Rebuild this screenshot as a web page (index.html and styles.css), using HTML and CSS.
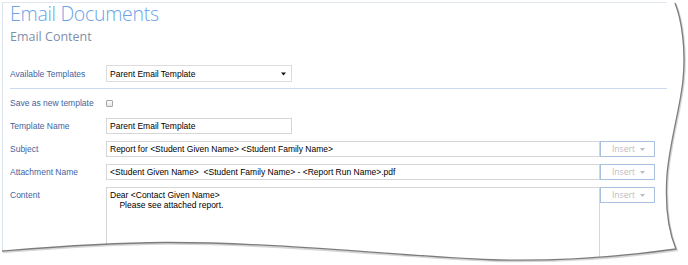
FILE: index.html
```html
<!DOCTYPE html>
<html>
<head>
<meta charset="utf-8">
<link rel="stylesheet" href="styles.css">
</head>
<body>
<div class="page">
  <div class="panel">
    <h1 class="title">Email Documents</h1>
    <h2 class="subtitle">Email Content</h2>
    <div class="row row-templates">
      <label class="label">Available Templates</label>
      <div class="select">
        <span>Parent Email Template</span>
        <svg class="select-arrow" width="5" height="4" viewBox="0 0 5 4"><path d="M0 0.5H5L2.5 3.5Z" fill="#111"/></svg>
      </div>
    </div>
    <div class="sep"></div>
    <div class="fields">
      <div class="row">
        <label class="label">Save as new template</label>
        <span class="checkbox"></span>
      </div>
      <div class="row">
        <label class="label">Template Name</label>
        <input class="input input-short" value="Parent Email Template">
      </div>
      <div class="row">
        <label class="label">Subject</label>
        <div class="group">
          <input class="input input-wide" value="Report for &lt;Student Given Name&gt; &lt;Student Family Name&gt;">
          <button class="insert">Insert<svg class="insert-arrow" width="5" height="3" viewBox="0 0 5 3"><path d="M0 0H5L2.5 3Z" fill="#bdbdbd"/></svg></button>
        </div>
      </div>
      <div class="row">
        <label class="label">Attachment Name</label>
        <div class="group">
          <input class="input input-wide" value="&lt;Student Given Name&gt;  &lt;Student Family Name&gt; - &lt;Report Run Name&gt;.pdf">
          <button class="insert">Insert<svg class="insert-arrow" width="5" height="3" viewBox="0 0 5 3"><path d="M0 0H5L2.5 3Z" fill="#bdbdbd"/></svg></button>
        </div>
      </div>
      <div class="row row-content">
        <label class="label">Content</label>
        <div class="group group-top">
          <textarea class="textarea">Dear &lt;Contact Given Name&gt;
    Please see attached report.</textarea>
          <button class="insert">Insert<svg class="insert-arrow" width="5" height="3" viewBox="0 0 5 3"><path d="M0 0H5L2.5 3Z" fill="#bdbdbd"/></svg></button>
        </div>
      </div>
    </div>
  </div>
  <svg class="tear" width="688" height="265" viewBox="0 0 688 265">
    <path fill="#ffffff" fill-rule="evenodd" d="M0,0 H688 V265 H0 Z M0,0 L675,0 L675,3 C682,20 686,50 683,80 C680,110 670,140 667,175 C665,205 668,230 676,249 C620,257 560,261 500,260 C420,258 280,242 165,242.5 C100,243 40,248 2,251 L0,251 Z"/>
    <path fill="none" stroke="#d6d6d6" stroke-width="2" transform="translate(0.8,1.2)" d="M675,3 C682,20 686,50 683,80 C680,110 670,140 667,175 C665,205 668,230 676,249 C620,257 560,261 500,260 C420,258 280,242 165,242.5 C100,243 40,248 2,251"/>
    <path fill="none" stroke="#7d7d7d" stroke-width="1.3" d="M675,3 C682,20 686,50 683,80 C680,110 670,140 667,175 C665,205 668,230 676,249 C620,257 560,261 500,260 C420,258 280,242 165,242.5 C100,243 40,248 2,251"/>
  </svg>
</div>
</body>
</html>
```
FILE: styles.css
```css
* {
  box-sizing: border-box;
}

html, body {
  margin: 0;
  padding: 0;
  background: #ffffff;
}

.page {
  position: relative;
  width: 688px;
  height: 265px;
  overflow: hidden;
  background: #ffffff;
}

.panel {
  margin: 2px 0 0 2px;
  width: 665px;
  height: 263px;
  border-top: 1px solid #e1e7ef;
  border-left: 1px solid #dde3ea;
  padding: 0 12px 0 7px;
}

.title {
  margin: -2px 0 0 0;
  font-family: "Open Sans", sans-serif;
  font-weight: 300;
  font-size: 19.5px;
  letter-spacing: -0.3px;
  line-height: 26px;
  color: #6aa4e8;
}

.subtitle {
  margin: 1px 0 0 0;
  font-family: "Open Sans", sans-serif;
  font-weight: 400;
  font-size: 12.5px;
  line-height: 18px;
  color: #7f90aa;
}

.row {
  display: grid;
  grid-template-columns: 96px 1fr;
  align-items: center;
  height: 16px;
}

.row-templates {
  margin-top: 19px;
  height: 17px;
}

.label {
  font-family: "Liberation Sans", Arial, sans-serif;
  font-size: 8.5px;
  line-height: 16px;
  color: #3f64a0;
  white-space: nowrap;
}

.select {
  width: 186px;
  height: 17px;
  border: 1px solid #dcdcdc;
  display: flex;
  align-items: center;
  justify-content: space-between;
  padding: 0 5px 0 3px;
  font-family: "Liberation Sans", Arial, sans-serif;
  font-size: 8.5px;
  color: #000;
}

.select-arrow {
  display: block;
}

.sep {
  margin: 6px -12px 0 0;
  height: 1px;
  background: #cbdaee;
}

.fields {
  margin-top: 6px;
  display: flex;
  flex-direction: column;
  gap: 7px;
}

.checkbox {
  display: block;
  width: 7px;
  height: 7px;
  border: 1px solid #a8a8a8;
  border-radius: 1px;
  background: linear-gradient(#fdfdfd, #e6e6e6);
}

.input {
  display: block;
  height: 16px;
  margin: 0;
  border: 1px solid #d6d6d6;
  border-radius: 0;
  padding: 0 3px;
  font-family: "Liberation Sans", Arial, sans-serif;
  font-size: 8.5px;
  color: #000;
  background: #fff;
  outline: none;
}

.input-short {
  width: 186px;
}

.group {
  display: flex;
  align-items: stretch;
  height: 16px;
}

.input-wide {
  flex: 1;
  min-width: 0;
}

.insert {
  width: 55px;
  height: 16px;
  margin: 0;
  padding: 0 0 0 2px;
  border: 1px solid #a9c0de;
  border-radius: 0;
  background: #ffffff;
  font-family: "Open Sans", sans-serif;
  font-size: 8.6px;
  color: #bcbcbc;
  display: flex;
  align-items: center;
  justify-content: center;
  gap: 5px;
  line-height: 1;
}

.insert-arrow {
  display: block;
}

.row-content {
  height: 90px;
  align-items: start;
}

.group-top {
  height: 90px;
  align-items: flex-start;
}

.textarea {
  flex: 1;
  min-width: 0;
  height: 90px;
  margin: 0;
  border: 1px solid #d6d6d6;
  border-radius: 0;
  padding: 2px 3px;
  font-family: "Liberation Sans", Arial, sans-serif;
  font-size: 8.5px;
  line-height: 10px;
  color: #000;
  resize: none;
  overflow: hidden;
  outline: none;
}

.tear {
  position: absolute;
  left: 0;
  top: 0;
  pointer-events: none;
}
```
